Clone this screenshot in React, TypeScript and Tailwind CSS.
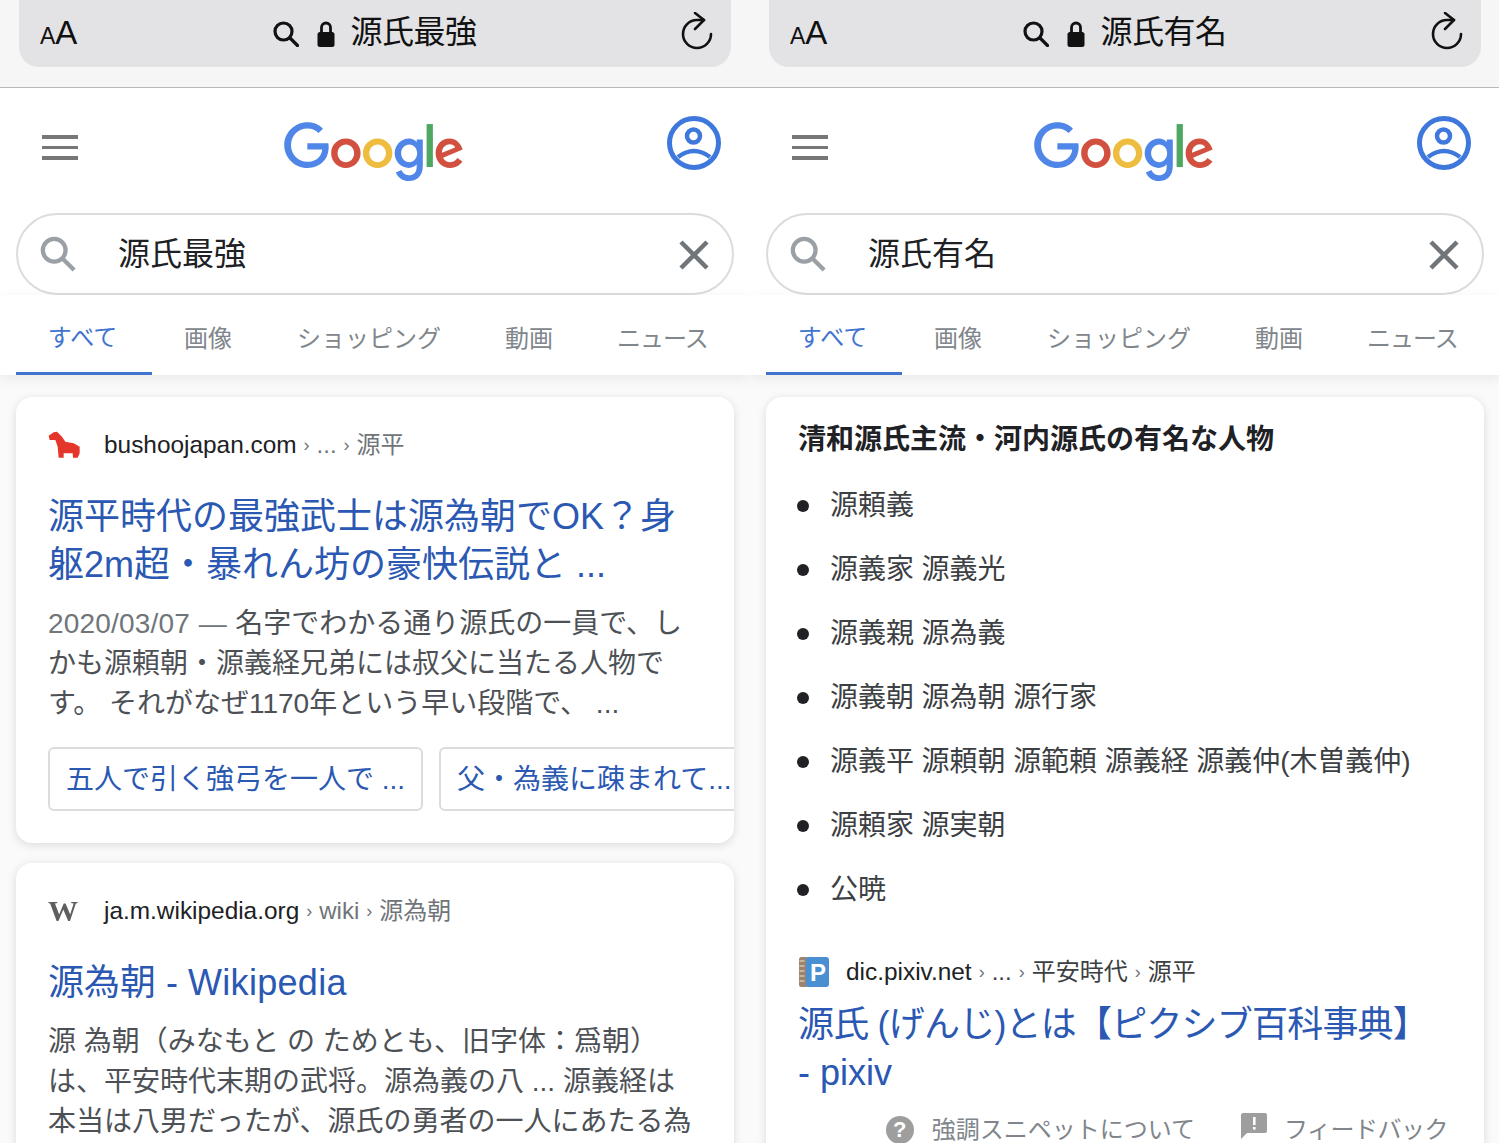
import React from "react";

const LINK = "text-[#2a58b2]";
const BODY = "text-[#4d5156]";

const Reload = () => (
  <svg width="34" height="38" viewBox="0 0 34 38" fill="none" stroke="#111" strokeWidth="2.6" strokeLinecap="round" strokeLinejoin="round">
    <path d="M24 8 H17 A14 14 0 1 0 31 22" />
    <path d="M15 1 L24 8 L15 17" />
  </svg>
);

const SmallSearch = () => (
  <svg width="26" height="26" viewBox="0 0 26 26" fill="none" stroke="#111" strokeWidth="3.2" strokeLinecap="round">
    <circle cx="10.5" cy="10.5" r="8.5" />
    <path d="M17 17 L24.5 24.5" />
  </svg>
);

const Lock = () => (
  <svg width="18" height="26" viewBox="0 0 18 26" fill="#111">
    <path d="M4.5 12 V6.5 a4.5 4.5 0 0 1 9 0 V12" fill="none" stroke="#111" strokeWidth="2.8" />
    <rect x="0.5" y="11" width="17" height="15" rx="2.5" />
  </svg>
);

const Account = () => (
  <svg width="54" height="54" viewBox="0 0 54 54" fill="none" stroke="#3f78dc">
    <circle cx="27" cy="27" r="24.5" strokeWidth="5" />
    <circle cx="26.5" cy="20" r="6.5" strokeWidth="4.5" />
    <path d="M11 41 Q27 29 43 41" strokeWidth="4.5" />
  </svg>
);

const Horse = () => (
  <svg className="blur-[0.5px] ml-[-1px] shrink-0" width="35" height="30" viewBox="20 15 105 90" fill="#e5362c">
    <path d="M25 32 L40 22 L50 20 L65 35 L75 50 L100 55 L118 65 L118 85 L112 98 L98 98 L97 85 L70 85 L70 98 L55 98 L52 65 L45 45 L28 45 Z" />
  </svg>
);

const Pixiv = () => (
  <svg width="32" height="32" viewBox="0 0 32 32">
    <rect x="1" y="1" width="10" height="30" rx="2.5" fill="#9a8470" />
    <path d="M1.5 5h5M1.5 10h5M1.5 15h5M1.5 20h5M1.5 25h5" stroke="#d8c3a5" strokeWidth="1.5" />
    <rect x="8" y="1" width="23" height="30" rx="3" fill="#4a8fd2" />
    <text x="20" y="25" textAnchor="middle" fontSize="24" fontWeight="700" fill="#fff" fontFamily="Liberation Sans">P</text>
  </svg>
);

const Logo = () => (
  <svg width="180" height="61" viewBox="0 0 272 92">
    <path fill="#d1503f" d="M115.75 47.18c0 12.77-9.99 22.18-22.25 22.18s-22.25-9.41-22.25-22.18C71.25 34.32 81.24 25 93.5 25s22.25 9.32 22.25 22.18zm-9.74 0c0-7.98-5.79-13.44-12.51-13.44S80.99 39.2 80.99 47.18c0 7.9 5.79 13.44 12.51 13.44s12.51-5.55 12.51-13.44z" />
    <path fill="#eebc3f" d="M163.75 47.18c0 12.77-9.99 22.18-22.25 22.18s-22.25-9.41-22.25-22.18c0-12.85 9.99-22.18 22.25-22.18s22.25 9.32 22.25 22.18zm-9.74 0c0-7.98-5.79-13.44-12.51-13.44s-12.51 5.46-12.51 13.44c0 7.9 5.79 13.44 12.51 13.44s12.51-5.55 12.51-13.44z" />
    <path fill="#4f86e8" d="M209.75 26.34v39.82c0 16.38-9.66 23.07-21.08 23.07-10.75 0-17.22-7.19-19.66-13.07l8.48-3.53c1.51 3.61 5.21 7.87 11.17 7.87 7.31 0 11.84-4.51 11.84-13v-3.19h-.34c-2.18 2.69-6.38 5.04-11.68 5.04-11.09 0-21.25-9.66-21.25-22.09 0-12.52 10.16-22.26 21.25-22.26 5.29 0 9.49 2.35 11.68 4.96h.34v-3.61h9.25zm-8.56 20.92c0-7.81-5.21-13.52-11.84-13.52-6.72 0-12.35 5.71-12.35 13.52 0 7.73 5.63 13.36 12.35 13.36 6.63 0 11.84-5.63 11.84-13.36z" />
    <path fill="#4fa862" d="M225 3v65h-9.5V3h9.5z" />
    <path fill="#d1503f" d="M262.02 54.48l7.56 5.04c-2.44 3.61-8.32 9.83-18.48 9.83-12.6 0-22.01-9.74-22.01-22.18 0-13.19 9.49-22.18 20.92-22.18 11.51 0 17.14 9.16 18.98 14.11l1.01 2.52-29.65 12.28c2.27 4.45 5.8 6.72 10.75 6.72 4.96 0 8.4-2.44 10.92-6.14zm-23.27-7.98l19.82-8.23c-1.09-2.77-4.37-4.7-8.23-4.7-4.95 0-11.84 4.37-11.59 12.93z" />
    <path fill="#4f86e8" d="M35.29 41.41V32H67c.31 1.64.47 3.58.47 5.68 0 7.06-1.93 15.79-8.15 22.01-6.05 6.3-13.78 9.66-24.02 9.66C16.32 69.35.36 53.89.36 34.91.36 15.93 16.32.47 35.3.47c10.5 0 17.98 4.12 23.6 9.49l-6.64 6.64c-4.03-3.78-9.49-6.72-16.97-6.72-13.86 0-24.7 11.17-24.7 25.03 0 13.86 10.84 25.03 24.7 25.03 8.99 0 14.11-3.61 17.39-6.89 2.66-2.66 4.41-6.46 5.1-11.65l-22.49.01z" />
  </svg>
);

const Tabs = () => (
  <div className="flex pl-4 h-[80px] bg-white shadow-[0_4px_12px_rgba(0,0,0,0.07)] relative text-[24px] text-[#80868b]">
    <div className="w-[136px] border-b-[3px] border-[#3f74cf] text-[#3f74cf] flex items-center justify-center pt-[9px] pr-[3px]">すべて</div>
    <div className="ml-8 flex items-center pt-[7px]">画像</div>
    <div className="ml-[65px] flex items-center pt-[7px]">ショッピング</div>
    <div className="ml-16 flex items-center pt-[7px]">動画</div>
    <div className="ml-16 flex items-center pt-[7px] tracking-[-1px]">ニュース</div>
  </div>
);

const Panel = ({ query, children }: { query: string; children: React.ReactNode }) => (
  <div className="w-[750px] h-[1143px] shrink-0 overflow-hidden bg-[#fafafa]">
    <div className="h-[88px] bg-[#f6f6f6] border-b border-[#b8b8b8] px-[19px]">
      <div className="h-[67px] rounded-b-[20px] bg-[#e3e3e6] grid grid-cols-[1fr_auto_1fr] items-center px-[19px] text-[#111]">
        <div className="flex items-baseline [font-family:'Liberation_Sans',sans-serif] leading-none mb-[2px] ml-[2px]">
          <span className="text-[23px]">A</span>
          <span className="text-[33px]">A</span>
        </div>
        <div className="flex items-center">
          <SmallSearch />
          <span className="ml-[18px]"><Lock /></span>
          <span className="ml-[15px] text-[32px] leading-none pb-[3px] tracking-[-0.5px]">{query}</span>
        </div>
        <div className="flex justify-end mb-[5px] mr-[-2px]"><Reload /></div>
      </div>
    </div>
    <div className="bg-white h-[125px] flex items-start justify-between pl-[42px] pr-[29px]">
      <div className="mt-[47px] w-9 flex flex-col gap-[7px]">
        <div className="h-[3.5px] bg-[#777]" />
        <div className="h-[3.5px] bg-[#777]" />
        <div className="h-[3.5px] bg-[#777]" />
      </div>
      <div className="mt-[34px] ml-[3px]"><Logo /></div>
      <div className="mt-[28px]"><Account /></div>
    </div>
    <div className="bg-white px-4">
      <div className="h-[82px] rounded-full border-2 border-[#dcdcdc] flex items-center pl-[22px] pr-[23px]">
        <svg width="36" height="36" viewBox="0 0 38 38" fill="none" stroke="#9aa0a6" strokeWidth="4.5">
          <circle cx="15" cy="15" r="12" />
          <path d="M24 24 L36 36" />
        </svg>
        <span className="ml-[42px] text-[32px] text-[#202124] leading-none flex-1">{query}</span>
        <svg className="mt-[2px]" width="30" height="30" viewBox="0 0 30 30" fill="none" stroke="#70757a" strokeWidth="4.5">
          <path d="M2 2 L28 28 M28 2 L2 28" />
        </svg>
      </div>
    </div>
    <Tabs />
    {children}
  </div>
);

const Card = ({ children, className }: { children: React.ReactNode; className: string }) => (
  <div className={`mx-4 bg-white rounded-2xl shadow-[0_2px_10px_rgba(0,0,0,0.13)] overflow-hidden ${className}`}>{children}</div>
);

const Sep = () => <span className="text-[#70757a] text-[18px] mx-[7px]">›</span>;

const Left = () => (
  <Panel query="源氏最強">
    <Card className="mt-[22px] pt-8 pl-8 h-[446px]">
      <div className="h-8 flex items-center text-[24px] leading-none whitespace-nowrap">
        <Horse />
        <span className="ml-[22px] text-[#202124] text-[24.4px]">bushoojapan.com</span>
        <Sep />
        <span className="text-[#70757a]">...</span>
        <Sep />
        <span className="text-[#70757a]">源平</span>
      </div>
      <div className={`mt-8 text-[36px] leading-[48px] whitespace-nowrap ${LINK}`}>
        <div>源平時代の最強武士は源為朝でOK？身</div>
        <div>躯2m超・暴れん坊の豪快伝説と ...</div>
      </div>
      <div className={`mt-[15px] text-[28px] leading-10 whitespace-nowrap ${BODY}`}>
        <div>
          <span className="text-[#70757a] tracking-[0.2px]">2020/03/07</span>
          <span className="text-[#70757a] inline-block w-[45px] text-center">—</span>
          名字でわかる通り源氏の一員で、し
        </div>
        <div>かも源頼朝・源義経兄弟には叔父に当たる人物で</div>
        <div>す。 それがなぜ1170年という早い段階で、 ...</div>
      </div>
      <div className={`mt-[23px] flex gap-4 text-[28px] whitespace-nowrap ${LINK}`}>
        <div className="h-16 w-[375px] shrink-0 border-2 border-[#dadce0] rounded-md flex items-center pl-4 pt-[2px]">五人で引く強弓を一人で ...</div>
        <div className="h-16 w-[320px] shrink-0 border-2 border-[#dadce0] rounded-md flex items-center pl-4 pt-[2px]">父・為義に疎まれて...</div>
      </div>
    </Card>
    <Card className="mt-5 pt-8 pl-8 h-[400px]">
      <div className="h-8 flex items-center text-[24px] leading-none whitespace-nowrap">
        <span className="w-8 [font-family:'Liberation_Serif',serif] font-bold text-[30px] text-[#5f5f5f] blur-[0.4px]">W</span>
        <span className="ml-6 text-[#202124] text-[24.4px]">ja.m.wikipedia.org</span>
        <Sep />
        <span className="text-[#70757a]">wiki</span>
        <Sep />
        <span className="text-[#70757a]">源為朝</span>
      </div>
      <div className={`mt-8 text-[36px] leading-[48px] whitespace-nowrap ${LINK}`}>
        源為朝 - <span className="tracking-[0.3px]">Wikipedia</span>
      </div>
      <div className={`mt-[15px] text-[28px] leading-10 whitespace-nowrap ${BODY}`}>
        <div>源 為朝（みなもと の ためとも、旧字体：爲朝）</div>
        <div>は、平安時代末期の武将。源為義の八 ... 源義経は</div>
        <div>本当は八男だったが、源氏の勇者の一人にあたる為</div>
      </div>
    </Card>
  </Panel>
);

const people = [
  "源頼義",
  "源義家 源義光",
  "源義親 源為義",
  "源義朝 源為朝 源行家",
  "源義平 源頼朝 源範頼 源義経 源義仲(木曽義仲)",
  "源頼家 源実朝",
  "公暁",
];

const Right = () => (
  <Panel query="源氏有名">
    <Card className="mt-[22px] pt-[23px] pl-8 h-[760px]">
      <div className="text-[28px] leading-10 font-bold text-[#202124] whitespace-nowrap">清和源氏主流・河内源氏の有名な人物</div>
      <ul className="mt-[14px]">
        {people.map((name) => (
          <li key={name} className="h-16 flex items-center text-[28px] text-[#3c4043] whitespace-nowrap tracking-[-0.05px]">
            <span className="w-3 h-3 rounded-full bg-[#202124] ml-[-1px] mr-[21px]" />
            {name}
          </li>
        ))}
      </ul>
      <div className="mt-[34px] h-8 flex items-center text-[24px] leading-none text-[#3c4043] whitespace-nowrap">
        <Pixiv />
        <span className="ml-4 text-[#202124] text-[24.4px]">dic.pixiv.net</span>
        <Sep />
        <span>...</span>
        <Sep />
        <span>平安時代</span>
        <Sep />
        <span>源平</span>
      </div>
      <div className={`mt-3 text-[36px] leading-[50px] whitespace-nowrap ${LINK}`}>
        <div className="tracking-[-0.8px]">源氏 (げんじ)とは【ピクシブ百科事典】</div>
        <div className="mt-[-2px]">- pixiv</div>
      </div>
      <div className="mt-4 h-8 flex items-center justify-end pr-9 text-[24px] leading-none text-[#80868b] whitespace-nowrap">
        <span className="w-7 h-7 rounded-full bg-[#9e9e9e] text-white text-[22px] font-bold flex items-center justify-center">?</span>
        <span className="ml-[18px]">強調スニペットについて</span>
        <svg className="ml-[46px] mb-[8px]" width="26" height="26" viewBox="0 0 26 26" fill="#9e9e9e">
          <path d="M2 0 H24 a2 2 0 0 1 2 2 V18 a2 2 0 0 1 -2 2 H6 L0 26 V2 a2 2 0 0 1 2 -2 Z" />
          <rect x="12" y="4" width="2.6" height="8" fill="#fff" />
          <rect x="12" y="14" width="2.6" height="2.6" fill="#fff" />
        </svg>
        <span className="ml-[17px] tracking-[-0.5px]">フィードバック</span>
      </div>
    </Card>
  </Panel>
);

export default function App() {
  return (
    <div className="w-[1499px] h-[1143px] overflow-hidden flex [font-family:'Liberation_Sans','Noto_Sans_CJK_JP',sans-serif]">
      <Left />
      <Right />
    </div>
  );
}
